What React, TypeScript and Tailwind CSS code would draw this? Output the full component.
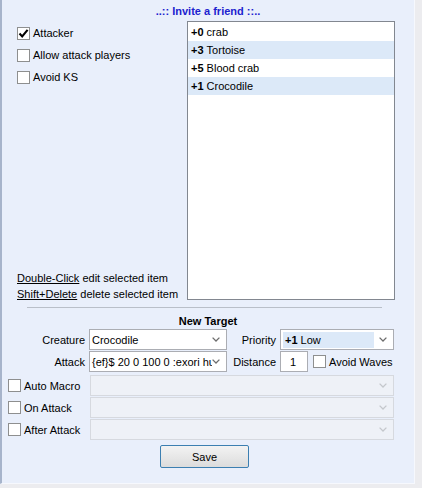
import React from "react";

const Check = ({ checked = false }: { checked?: boolean }) => (
  <span className="w-[13px] h-[13px] shrink-0 border border-[#8e8f8f] bg-white flex items-center justify-center">
    {checked && (
      <svg width="11" height="11" viewBox="0 0 11 11">
        <path d="M1.5 5.5 L4.2 8.4 L9.6 1.8" fill="none" stroke="#000" strokeWidth="2.1" />
      </svg>
    )}
  </span>
);

const Chevron = ({ color }: { color: string }) => (
  <svg width="8" height="5" viewBox="0 0 8 5" className="shrink-0">
    <path d="M0.6 0.6 L4 4 L7.4 0.6" fill="none" stroke={color} strokeWidth="1.3" />
  </svg>
);

const Combo = ({
  className,
  children,
  disabled = false,
}: {
  className: string;
  children?: React.ReactNode;
  disabled?: boolean;
}) => (
  <div
    className={
      "h-[21px] flex items-center pr-[6px] border " +
      (disabled ? "bg-[#eef1f7] border-[#d6d9df] " : "bg-white border-[#abadb3] ") +
      className
    }
  >
    <div className="flex-1 min-w-0 overflow-hidden whitespace-nowrap pl-[2px]">{children}</div>
    <Chevron color={disabled ? "#c4c7cc" : "#6d6d6d"} />
  </div>
);

const items = [
  { n: "+0", name: "crab", hl: false },
  { n: "+3", name: "Tortoise", hl: true },
  { n: "+5", name: "Blood crab", hl: false },
  { n: "+1", name: "Crocodile", hl: true },
];

export default function App() {
  return (
    <div className="w-[422px] h-[488px] bg-[#ececef] text-[11px] leading-[14px] text-black font-['Liberation_Sans',Arial,sans-serif]">
      <div className="w-[415px] h-[484px] bg-[#e9effb] border-l-2 border-l-[#a7b4cb] border-r border-r-[#f6f8fd] border-b border-b-[#f6f8fd] flex flex-col">
        {/* title */}
        <div className="h-[21px] pt-[4px] text-center font-bold text-[#1c22cf]">..:: Invite a friend ::..</div>

        {/* options + list */}
        <div className="flex h-[279px]">
          <div className="w-[185px] flex flex-col justify-between pl-[15px]">
            <div className="pt-[1px]">
              <label className="h-[22px] flex items-center gap-[3px]">
                <Check checked />
                <span>Attacker</span>
              </label>
              <label className="h-[22px] flex items-center gap-[3px]">
                <Check />
                <span>Allow attack players</span>
              </label>
              <label className="h-[22px] flex items-center gap-[3px]">
                <Check />
                <span>Avoid KS</span>
              </label>
            </div>
            <div className="leading-[16px] mb-[-2px]">
              <div>
                <span className="underline">Double-Click</span> edit selected item
              </div>
              <div>
                <span className="underline">Shift+Delete</span> delete selected item
              </div>
            </div>
          </div>
          <div className="w-[208px] h-[279px] border border-[#828790] bg-white pt-[1px]">
            {items.map((it) => (
              <div
                key={it.name}
                className={"h-[18px] flex items-center pl-[3px] " + (it.hl ? "bg-[#dce9f8]" : "")}
              >
                <span className="font-bold">{it.n}</span>
                <span>&nbsp;{it.name}</span>
              </div>
            ))}
          </div>
        </div>

        {/* separator */}
        <div className="mt-[7px] ml-[25px] w-[355px] h-px bg-[#b9bfc9]" />

        <div className="mt-[5px] h-[17px] leading-[16px] text-center font-bold">New Target</div>

        {/* creature / priority */}
        <div className="flex items-center h-[21px] mt-[-1px]">
          <span className="w-[83px] text-right">Creature</span>
          <Combo className="ml-[4px] w-[138px]">Crocodile</Combo>
          <span className="w-[49px] text-right">Priority</span>
          <div className="ml-[4px] w-[114px] h-[21px] border border-[#abadb3] bg-white flex items-center pr-[6px]">
            <div className="ml-[2px] w-[91px] h-[16px] bg-[#dce9f8] flex items-center pl-[2px]">
              <span className="font-bold">+1</span>
              <span>&nbsp;Low</span>
            </div>
            <div className="flex-1" />
            <Chevron color="#6d6d6d" />
          </div>
        </div>

        {/* attack / distance */}
        <div className="flex items-center h-[21px] mt-[1px]">
          <span className="w-[83px] text-right">Attack</span>
          <Combo className="ml-[4px] w-[138px]">{"{ef}$ 20 0 100 0 :exori hur"}</Combo>
          <span className="w-[49px] text-right">Distance</span>
          <div className="ml-[4px] w-[28px] h-[21px] border border-[#abadb3] bg-white flex items-center pl-[9px]">1</div>
          <label className="ml-[5px] flex items-center gap-[3px]">
            <Check />
            <span>Avoid Waves</span>
          </label>
        </div>

        {/* macros */}
        <div className="mt-[3px] flex flex-col gap-[1px]">
          {["Auto Macro", "On Attack", "After Attack"].map((t) => (
            <div key={t} className="flex items-center h-[21px]">
              <label className="w-[83px] flex items-center gap-[3px] pl-[6px]">
                <Check />
                <span>{t}</span>
              </label>
              <Combo className="ml-[5px] w-[304px]" disabled />
            </div>
          ))}
        </div>

        {/* save */}
        <div className="mt-[5px] pl-[158px]">
          <button className="w-[89px] h-[23px] border border-[#3c7fb1] rounded-[2px] bg-gradient-to-b from-[#f3f3f3] to-[#dcdcdc] text-[11px] text-black">
            Save
          </button>
        </div>
      </div>
    </div>
  );
}
